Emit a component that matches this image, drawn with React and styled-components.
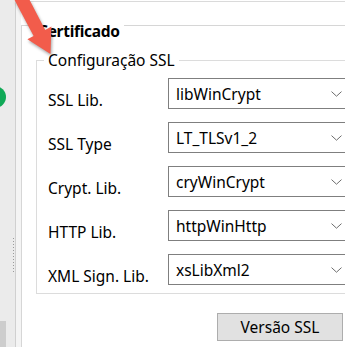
import styled, { createGlobalStyle } from "styled-components";

const GlobalStyle = createGlobalStyle`
  html, body {
    margin: 0;
    padding: 0;
    background: #ffffff;
    overflow: hidden;
  }
  body {
    font-family: "Noto Sans", "Open Sans", sans-serif;
    color: #000;
  }
`;

const options = [
  { label: "SSL Lib.", value: "libWinCrypt" },
  { label: "SSL Type", value: "LT_TLSv1_2" },
  { label: "Crypt. Lib.", value: "cryWinCrypt" },
  { label: "HTTP Lib.", value: "httpWinHttp" },
  { label: "XML Sign. Lib.", value: "xsLibXml2" },
];

const Chevron = () => (
  <svg width="11" height="6" viewBox="0 0 11 6">
    <polyline
      points="0.5,0.6 5.5,5.2 10.5,0.6"
      fill="none"
      stroke="#6e6e6e"
      strokeWidth="1"
    />
  </svg>
);

// red callout arrow drawn over the top-left corner
const Arrow = () => (
  <ArrowSvg width="64" height="64" viewBox="0 0 64 64">
    <polygon
      points="10.3,-8 33.6,36 27.4,39.3 50.5,54 51.4,26.6 45.2,29.9 22.3,-14"
      fill="#f25c4b"
    />
  </ArrowSvg>
);

const App = () => {
  return (
    <>
      <GlobalStyle />
      <Page>
        <SidePanel>
          <StatusDot />
          <BottomTab />
        </SidePanel>
        <Splitter>
          <Grip />
          <Rail />
        </Splitter>
        <MainPanel>
          <GroupBox $bold>
            <Caption $bold $indent={12} $drop={6}>
              Certificado
            </Caption>
            <CertContent>
              <GroupBox>
                <Caption $indent={7}>Configuração SSL</Caption>
                <Rows>
                  {options.map((o) => (
                    <Row key={o.label}>
                      <Label>{o.label}</Label>
                      <Combo>
                        <span>{o.value}</span>
                        <Chevron />
                      </Combo>
                    </Row>
                  ))}
                </Rows>
              </GroupBox>
              <Button>Versão SSL</Button>
            </CertContent>
          </GroupBox>
        </MainPanel>
        <Arrow />
      </Page>
    </>
  );
};

const Page = styled.div`
  position: relative;
  display: flex;
  width: 345px;
  height: 347px;
  overflow: hidden;
`;

const SidePanel = styled.div`
  position: relative;
  width: 12px;
  flex-shrink: 0;
  background: #ebebeb;
  display: flex;
  flex-direction: column;
  justify-content: flex-end;
`;

const StatusDot = styled.div`
  position: absolute;
  left: -16px;
  top: 86px;
  width: 22px;
  height: 22px;
  border-radius: 50%;
  background: #10a957;
`;

const BottomTab = styled.div`
  width: 6px;
  height: 26px;
  background: #cdcdcd;
`;

const Splitter = styled.div`
  display: flex;
  width: 9px;
  flex-shrink: 0;
  background: #ebebeb;
`;

const Grip = styled.div`
  width: 3px;
  margin-top: 237px;
  height: 36px;
  background-image: radial-gradient(circle, #9a9a9a 0.8px, transparent 1px);
  background-size: 3px 3px;
`;

const Rail = styled.div`
  width: 5px;
  border-left: 1px solid #d0d0d0;
  background: #f4f4f4;
`;

const MainPanel = styled.div`
  flex: 1;
  margin-top: 1px;
  border-top: 1px solid #dadada;
  padding-top: 13px;
  background: #fff;
`;

const GroupBox = styled.fieldset`
  margin: 0;
  padding: 0;
  min-width: 0;
  border: 1px solid ${(p) => (p.$bold ? "#d6d6d6" : "#dcdcdc")};
  ${(p) => (p.$bold ? "border-right: none; border-bottom: none;" : "")}
  ${(p) => (p.$bold ? "height: 360px;" : "width: 327px;")}
`;

const Caption = styled.legend`
  position: relative;
  top: ${(p) => p.$drop || 0}px;
  margin-left: ${(p) => p.$indent}px;
  padding: 0 4px;
  font-size: ${(p) => (p.$bold ? "15.5px" : "15.5px")};
  font-weight: ${(p) => (p.$bold ? 700 : 400)};
  letter-spacing: ${(p) => (p.$bold ? "-0.3px" : "0")};
  line-height: 20px;
  color: #000;
`;

const CertContent = styled.div`
  display: flex;
  flex-direction: column;
  align-items: flex-start;
  padding: 15px 0 0 14px;
`;

const Rows = styled.div`
  display: grid;
  grid-auto-rows: 31px;
  row-gap: 13px;
  padding: 8px 10px 8px 11px;
`;

const Row = styled.div`
  display: grid;
  grid-template-columns: 120px 186px;
  height: 31px;
`;

const Label = styled.div`
  font-size: 15.5px;
  line-height: 31px;
  padding-top: 7px;
  height: 24px;
  white-space: nowrap;
`;

const Combo = styled.div`
  box-sizing: border-box;
  height: 31px;
  display: flex;
  align-items: center;
  justify-content: space-between;
  padding: 0 11px 0 7px;
  border: 1px solid #7f7f7f;
  background: #fff;
  font-size: 15.5px;
  white-space: nowrap;
`;

const Button = styled.button`
  box-sizing: border-box;
  margin: 19px 0 0 181px;
  width: 126px;
  height: 28px;
  padding: 0;
  background: #e1e1e1;
  border: 1px solid #adadad;
  border-radius: 0;
  font-family: "Noto Sans", "Open Sans", sans-serif;
  font-size: 15.5px;
  color: #000;
`;

const ArrowSvg = styled.svg`
  position: absolute;
  left: 0;
  top: 0;
  filter: drop-shadow(1px 2px 1.5px rgba(0, 0, 0, 0.35));
`;

export default App;
